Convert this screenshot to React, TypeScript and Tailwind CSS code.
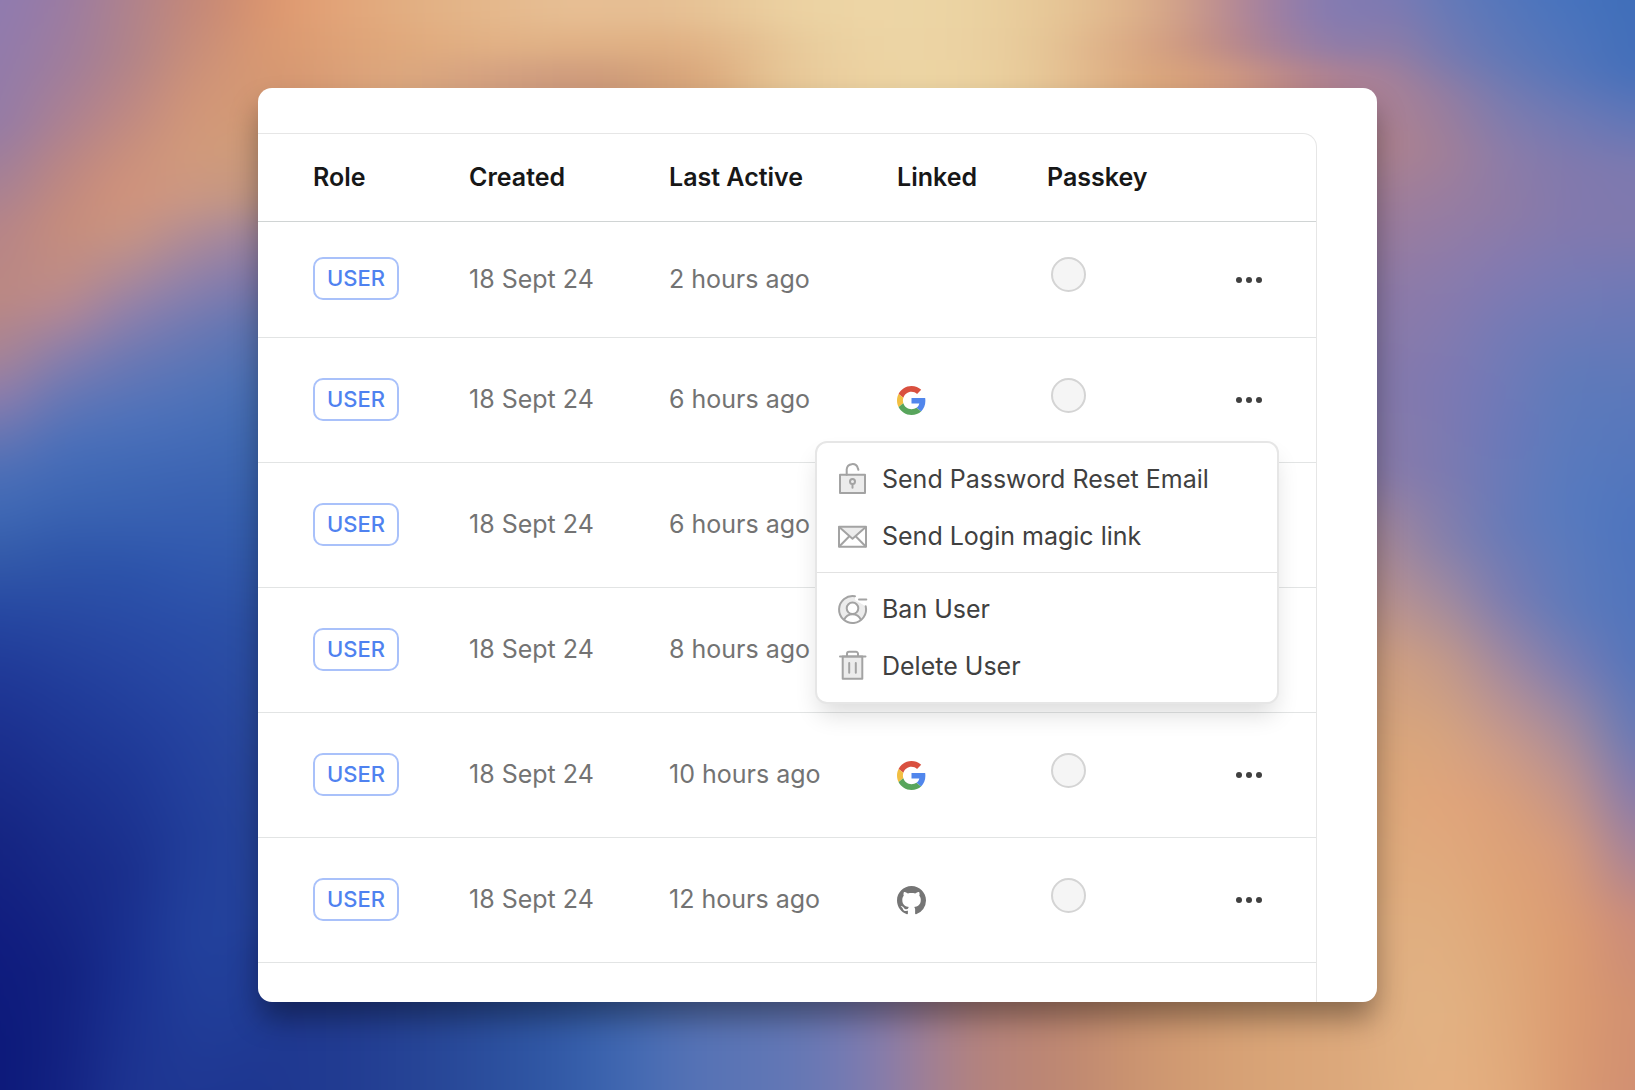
import React from "react";

interface UserRow {
  id: number;
  role: string;
  created: string;
  lastActive: string;
  linked?: "google" | "github";
}

const users: UserRow[] = [
  { id: 1, role: "USER", created: "18 Sept 24", lastActive: "2 hours ago" },
  { id: 2, role: "USER", created: "18 Sept 24", lastActive: "6 hours ago", linked: "google" },
  { id: 3, role: "USER", created: "18 Sept 24", lastActive: "6 hours ago" },
  { id: 4, role: "USER", created: "18 Sept 24", lastActive: "8 hours ago" },
  { id: 5, role: "USER", created: "18 Sept 24", lastActive: "10 hours ago", linked: "google" },
  { id: 6, role: "USER", created: "18 Sept 24", lastActive: "12 hours ago", linked: "github" },
];

const openMenuId = 2;

type Stop = [number, string];

// vertical colour ramps of the wallpaper, left to right
const columns: { x: number; width: number; stops: Stop[] }[] = [
  {
    x: -120,
    width: 152,
    stops: [
      [0, "#8f7bb0"], [180, "#947ba6"], [250, "#a27f98"], [330, "#b58488"], [430, "#bb8882"], [510, "#a98494"],
      [570, "#8e7dab"], [620, "#6d77b2"], [680, "#4d6fb7"], [740, "#3f68b4"], [800, "#345baa"], [880, "#2648a2"],
      [960, "#203a98"], [1060, "#1b2f8e"], [1200, "#152582"], [1350, "#101c7f"], [1500, "#0c197a"],
    ],
  },
  {
    x: 32,
    width: 64,
    stops: [
      [0, "#9a7ba3"], [100, "#a07d9b"], [180, "#ad8190"], [240, "#bb8683"], [320, "#c68c7b"], [400, "#c18d84"],
      [450, "#b28795"], [510, "#8a7eac"], [570, "#6677b5"], [640, "#4a6fb9"], [720, "#3c65b3"], [800, "#2f56aa"],
      [900, "#2747a1"], [1000, "#203b99"], [1150, "#1a2f8d"], [1250, "#172987"], [1400, "#12217f"], [1568, "#132282"],
    ],
  },
  {
    x: 96,
    width: 64,
    stops: [
      [0, "#ae828d"], [80, "#b08389"], [150, "#bc8784"], [220, "#c98f7c"], [280, "#d1937b"], [340, "#c79483"],
      [400, "#ac8999"], [450, "#8f80ab"], [520, "#6a78b4"], [600, "#4f72ba"], [680, "#3f68b5"], [740, "#3861b1"],
      [820, "#2c53aa"], [930, "#2747a3"], [1100, "#1e3896"], [1250, "#1a2f8c"], [1400, "#193090"], [1568, "#1d3491"],
    ],
  },
  {
    x: 160,
    width: 64,
    stops: [
      [0, "#c38779"], [80, "#c98e79"], [150, "#d19578"], [220, "#d29a7b"], [290, "#c99785"], [350, "#ab8999"],
      [410, "#8c80ac"], [480, "#6a78b4"], [550, "#5474b8"], [620, "#466db8"], [700, "#3b63b3"], [800, "#3159af"],
      [900, "#2a4ea8"], [1050, "#2543a0"], [1200, "#213e9a"], [1350, "#22419d"], [1568, "#1f3893"],
    ],
  },
  {
    x: 224,
    width: 600,
    stops: [
      [0, "#d39070"], [100, "#d79a74"], [200, "#cf9c78"], [280, "#c29680"], [340, "#9d85a0"], [400, "#8079ab"],
      [470, "#5d74b2"], [550, "#4a70b5"], [620, "#406ab2"], [750, "#355fae"], [900, "#2c50a4"], [1100, "#28479c"],
      [1300, "#24429b"], [1450, "#214099"], [1568, "#1d3590"],
    ],
  },
  {
    x: 824,
    width: 586,
    stops: [
      [0, "#8579b0"], [60, "#977ca2"], [120, "#b08390"], [200, "#b0838c"], [300, "#9f7d99"], [420, "#8e7aa6"],
      [550, "#8579aa"], [680, "#8a7ba8"], [760, "#a58799"], [850, "#b9918f"], [950, "#d09f80"], [1100, "#dba77a"],
      [1250, "#dfab7c"], [1400, "#e0b183"], [1568, "#e0af80"],
    ],
  },
  {
    x: 1410,
    width: 64,
    stops: [
      [0, "#667ab8"], [80, "#787ab0"], [140, "#977da0"], [220, "#a27f97"], [300, "#987da1"], [400, "#8b7bab"],
      [550, "#7e79b2"], [680, "#7d7ab0"], [780, "#8780ab"], [850, "#a08aa0"], [950, "#c59a88"], [1050, "#d6a47e"],
      [1150, "#e1a57b"], [1300, "#e0ad7f"], [1450, "#e2b283"], [1568, "#e5b182"],
    ],
  },
  {
    x: 1474,
    width: 64,
    stops: [
      [0, "#5476bb"], [80, "#6078b7"], [150, "#797bb0"], [220, "#8b7ca9"], [300, "#8e7ba5"], [380, "#847ab0"],
      [480, "#747ab6"], [620, "#6b79b9"], [760, "#677ab8"], [860, "#7a7bb1"], [930, "#9684a5"], [1000, "#b28f97"],
      [1080, "#cc9a87"], [1160, "#da9f79"], [1280, "#dfa376"], [1400, "#dea87a"], [1568, "#e2ab7c"],
    ],
  },
  {
    x: 1538,
    width: 64,
    stops: [
      [0, "#4673be"], [100, "#5475ba"], [170, "#6f79b4"], [240, "#8179ad"], [320, "#8279ae"], [420, "#757ab6"],
      [540, "#5f7aba"], [720, "#567abf"], [880, "#5f7aba"], [960, "#7b7cb2"], [1040, "#a0899f"], [1120, "#bd928f"],
      [1220, "#d69a7b"], [1350, "#dc9c71"], [1568, "#da9a71"],
    ],
  },
  {
    x: 1602,
    width: 153,
    stops: [
      [0, "#3f6eb9"], [100, "#446fba"], [170, "#5f76b8"], [240, "#7c79b0"], [330, "#8079ae"], [430, "#6d79b7"],
      [580, "#5a78bb"], [760, "#4d74be"], [950, "#5475bb"], [1050, "#6578b7"], [1130, "#8079ae"], [1220, "#a1809b"],
      [1320, "#c98a7c"], [1450, "#d19070"], [1568, "#d18f72"],
    ],
  },
];

// horizontal ramps above and below the card
const bands: { y: number; height: number; width: number; stops: Stop[] }[] = [
  {
    y: -120,
    height: 148,
    width: 1120,
    stops: [
      [246, "#db936c"], [300, "#e2a075"], [400, "#e2b083"], [540, "#e7bf94"], [620, "#e6bd92"], [690, "#e7c597"],
      [760, "#ecd2a2"], [850, "#edd6a6"], [930, "#ebd3a2"], [1020, "#e6c595"], [1100, "#dcae88"], [1150, "#c99789"],
      [1200, "#ac829a"], [1260, "#897bb0"], [1340, "#717ab6"],
    ],
  },
  {
    y: 28,
    height: 32,
    width: 1120,
    stops: [
      [246, "#d8966f"], [300, "#dd9e74"], [380, "#e0a97c"], [480, "#e2b286"], [580, "#e0b185"], [650, "#e0b083"],
      [720, "#e4be90"], [770, "#e9cd9d"], [850, "#edd5a5"], [930, "#ebd2a2"], [1000, "#e6c797"], [1060, "#dfb188"],
      [1120, "#d39f80"], [1170, "#bf8b86"], [1220, "#a6809a"], [1280, "#8f7caa"], [1340, "#767ab2"],
    ],
  },
  {
    y: 60,
    height: 70,
    width: 1120,
    stops: [
      [246, "#d3946f"], [300, "#d99b74"], [380, "#dca87e"], [480, "#d3a081"], [560, "#cd9a7c"], [620, "#d2a079"],
      [680, "#dca97c"], [740, "#e5c494"], [800, "#ebcf9f"], [870, "#edd5a4"], [940, "#ebd2a0"], [1000, "#e7c797"],
      [1060, "#dfb287"], [1120, "#d9a379"], [1180, "#d29a80"], [1240, "#b98689"], [1300, "#a97f97"], [1340, "#967bab"],
    ],
  },
  {
    y: 940,
    height: 270,
    width: 1120,
    stops: [
      [246, "#1e3790"], [330, "#213b91"], [430, "#284898"], [530, "#3058a5"], [600, "#4068b2"], [660, "#5572b5"],
      [760, "#6277b5"], [830, "#7b7bb2"], [870, "#967da0"], [930, "#b3827e"], [1020, "#be8771"], [1100, "#cd9670"],
      [1200, "#d8a376"], [1300, "#dda97c"],
    ],
  },
];

const renderStops = (stops: Stop[]) =>
  stops.map(([offset, color]) => <stop key={offset} offset={offset / 1568} stopColor={color} />);

const Wallpaper: React.FC = () => (
  <svg
    className="absolute inset-0 h-full w-full"
    viewBox="0 0 1635 1090"
    preserveAspectRatio="none"
    aria-hidden="true"
  >
    <defs>
      <filter id="soften" filterUnits="userSpaceOnUse" x="-120" y="-120" width="1875" height="1330" colorInterpolationFilters="sRGB">
        <feGaussianBlur stdDeviation="28 12" />
      </filter>
      {columns.map((col, index) => (
        <linearGradient key={index} id={`col-${index}`} gradientUnits="userSpaceOnUse" x1="0" y1="0" x2="0" y2="1090">
          {renderStops(col.stops)}
        </linearGradient>
      ))}
      {bands.map((band, index) => (
        <linearGradient key={index} id={`band-${index}`} gradientUnits="userSpaceOnUse" x1="0" y1="0" x2="1635" y2="0">
          {renderStops(band.stops)}
        </linearGradient>
      ))}
    </defs>
    <g filter="url(#soften)">
      {columns.map((col, index) => (
        <rect key={index} x={col.x} y="-120" width={col.width} height="1330" fill={`url(#col-${index})`} />
      ))}
      {bands.map((band, index) => (
        <rect key={index} x="256" y={band.y} width={band.width} height={band.height} fill={`url(#band-${index})`} />
      ))}
    </g>
  </svg>
);

const GoogleIcon: React.FC = () => (
  <svg viewBox="0 0 48 48" className="h-[29px] w-[29px]" role="img" aria-label="Google">
    <path fill="#d9503f" d="M24 9.5c3.54 0 6.71 1.22 9.21 3.6l6.85-6.85C35.9 2.38 30.47 0 24 0 14.62 0 6.51 5.38 2.56 13.22l7.98 6.19C12.43 13.72 17.74 9.5 24 9.5z" />
    <path fill="#5186ec" d="M46.98 24.55c0-1.57-.15-3.09-.38-4.55H24v9.02h12.94c-.58 2.96-2.26 5.48-4.78 7.18l7.73 6c4.51-4.18 7.09-10.36 7.09-17.65z" />
    <path fill="#f2bf42" d="M10.53 28.59c-.48-1.45-.76-2.99-.76-4.59s.27-3.14.76-4.59l-7.98-6.19C.92 16.46 0 20.12 0 24c0 3.88.92 7.54 2.56 10.78l7.97-6.19z" />
    <path fill="#58a55c" d="M24 48c6.48 0 11.93-2.13 15.89-5.81l-7.73-6c-2.15 1.45-4.92 2.3-8.16 2.3-6.26 0-11.57-4.22-13.47-9.91l-7.98 6.19C6.51 42.62 14.62 48 24 48z" />
  </svg>
);

const GithubIcon: React.FC = () => (
  <svg viewBox="0 0 16 16" className="h-[29px] w-[29px] fill-[#757575]" role="img" aria-label="GitHub">
    <path d="M8 0C3.58 0 0 3.58 0 8c0 3.54 2.29 6.53 5.47 7.59.4.07.55-.17.55-.38 0-.19-.01-.82-.01-1.49-2.01.37-2.53-.49-2.69-.94-.09-.23-.48-.94-.82-1.13-.28-.15-.68-.52-.01-.53.63-.01 1.08.58 1.23.82.72 1.21 1.87.87 2.33.66.07-.52.28-.87.51-1.07-1.78-.2-3.64-.89-3.64-3.95 0-.87.31-1.59.82-2.15-.08-.2-.36-1.02.08-2.12 0 0 .67-.21 2.2.82.64-.18 1.32-.27 2-.27.68 0 1.36.09 2 .27 1.53-1.04 2.2-.82 2.2-.82.44 1.1.16 1.92.08 2.12.51.56.82 1.27.82 2.15 0 3.07-1.87 3.75-3.65 3.95.29.25.54.73.54 1.48 0 1.07-.01 1.93-.01 2.2 0 .21.15.46.55.38A8.013 8.013 0 0016 8c0-4.42-3.58-8-8-8z" />
  </svg>
);

const menuIcon = "h-8 w-8 shrink-0 overflow-visible fill-none stroke-[#a3a3a3] stroke-2";

const UnlockIcon: React.FC = () => (
  <svg viewBox="0 0 32 32" className={menuIcon} strokeLinecap="round" strokeLinejoin="round" aria-hidden="true">
    <rect x="3" y="10.7" width="25" height="18.3" fill="#ececec" />
    <path d="M9.7 10.7V5.4a5.7 5.7 0 0 1 11.2-1l.5 1.4" />
    <circle cx="15.5" cy="17.6" r="2.5" />
    <path d="M15.5 20.4v3.4" />
  </svg>
);

const MailIcon: React.FC = () => (
  <svg viewBox="0 0 32 32" className={menuIcon} strokeLinecap="round" strokeLinejoin="round" aria-hidden="true">
    <path d="M2 5.8h27L15.5 17.8z" fill="#ececec" stroke="none" />
    <rect x="2" y="5.8" width="27" height="20" />
    <path d="M2.5 6.3 15.5 17.8 28.5 6.3M2.5 25.3l9.6-9.8M28.5 25.3l-9.6-9.8" />
  </svg>
);

const BanIcon: React.FC = () => (
  <svg viewBox="0 0 32 32" className={menuIcon} strokeLinecap="round" strokeLinejoin="round" aria-hidden="true">
    <path
      d="M18 2.2A13.5 13.5 0 0 0 7.2 26c1.5-3.7 4.5-5.7 8.3-5.7s6.8 2 8.3 5.7a13.5 13.5 0 0 0 4.9-13.7L18 6z"
      fill="#ececec"
      stroke="none"
    />
    <circle cx="15.5" cy="14.3" r="5.8" fill="#fff" />
    <path d="M18 2.2A13.5 13.5 0 1 0 28.7 12.3" />
    <path d="M7.2 25.6c1.5-3.5 4.5-5.4 8.3-5.4s6.8 1.9 8.3 5.4" />
    <path d="M22 5.5h7.3" />
  </svg>
);

const TrashIcon: React.FC = () => (
  <svg viewBox="0 0 32 32" className={menuIcon} strokeLinecap="round" strokeLinejoin="round" aria-hidden="true">
    <path d="M5.7 5.5h19.6v22.3H5.7z" fill="#ececec" />
    <path d="M3 5.5h25.5M10 5.5V2.8A2 2 0 0 1 12 .8h7a2 2 0 0 1 2 2v2.7M12.2 12v9.8M18.8 12v9.8" />
  </svg>
);

const menuGroups = [
  [
    { label: "Send Password Reset Email", Icon: UnlockIcon },
    { label: "Send Login magic link", Icon: MailIcon },
  ],
  [
    { label: "Ban User", Icon: BanIcon },
    { label: "Delete User", Icon: TrashIcon },
  ],
];

const ActionsMenu: React.FC = () => (
  <div
    role="menu"
    className="absolute top-[103px] right-[37px] z-10 w-[464px] divide-y divide-[#e2e2e2] rounded-xl border-2 border-[#e6e6e6] bg-white text-left shadow-[0_14px_24px_-4px_rgba(0,0,0,0.14)]"
  >
    {menuGroups.map((group, index) => (
      <div key={index} className="pt-2 pb-[7px]">
        {group.map(({ label, Icon }) => (
          <button
            key={label}
            type="button"
            role="menuitem"
            className="flex h-[57px] w-full items-center gap-[13px] px-5 text-[25px] text-[#404040]"
          >
            <Icon />
            {label}
          </button>
        ))}
      </div>
    ))}
  </div>
);

const App: React.FC = () => {
  return (
    <main className="relative flex min-h-screen flex-col overflow-hidden px-[258px] py-[88px] font-['Inter',sans-serif]">
      <Wallpaper />
      <section className="relative flex flex-1 flex-col rounded-[14px] bg-white pt-[45px] pr-[60px] shadow-[0_18px_30px_-2px_rgba(0,0,0,0.38)]">
        <div className="flex-1 rounded-tr-[14px] border-t border-r border-[#e6e6e6]">
          <table className="w-full table-fixed border-separate border-spacing-0 text-left text-[25px] whitespace-nowrap">
            <thead>
              <tr className="h-[88px] text-[#171717] [&>th]:border-b [&>th]:border-[#d0d4d4] [&>th]:pl-[55px] [&>th]:font-semibold">
                <th className="w-[156px]">Role</th>
                <th className="w-[200px]">Created</th>
                <th className="w-[228px]">Last Active</th>
                <th className="w-[150px]">Linked</th>
                <th className="w-[160px]">Passkey</th>
                <th aria-label="Actions"></th>
              </tr>
            </thead>
            <tbody className="text-[#737373]">
              {users.map((user) => (
                <tr
                  key={user.id}
                  className="h-[125px] first:h-[116px] [&>td]:border-b [&>td]:border-[#e2e4e4] [&>td]:pl-[55px]"
                >
                  <td className="pb-0.5">
                    <span className="flex h-[43px] w-[86px] items-center justify-center rounded-[10px] border-2 border-[#a9c1fa] text-[22px] font-medium text-[#4f82f0]">
                      {user.role}
                    </span>
                  </td>
                  <td>{user.created}</td>
                  <td>{user.lastActive}</td>
                  <td>
                    {user.linked === "google" && <GoogleIcon />}
                    {user.linked === "github" && <GithubIcon />}
                  </td>
                  <td className="pb-2.5">
                    <span className="ml-1 block h-[35px] w-[35px] rounded-full border-2 border-[#d4d4d4] bg-[#f5f5f5]"></span>
                  </td>
                  <td className="relative pr-[54px]">
                    <button type="button" aria-label="User actions" className="ml-auto flex h-8 items-center gap-1">
                      <span className="h-1.5 w-1.5 rounded-full bg-[#404040]"></span>
                      <span className="h-1.5 w-1.5 rounded-full bg-[#404040]"></span>
                      <span className="h-1.5 w-1.5 rounded-full bg-[#404040]"></span>
                    </button>
                    {user.id === openMenuId && <ActionsMenu />}
                  </td>
                </tr>
              ))}
            </tbody>
          </table>
        </div>
      </section>
    </main>
  );
};

export default App;
